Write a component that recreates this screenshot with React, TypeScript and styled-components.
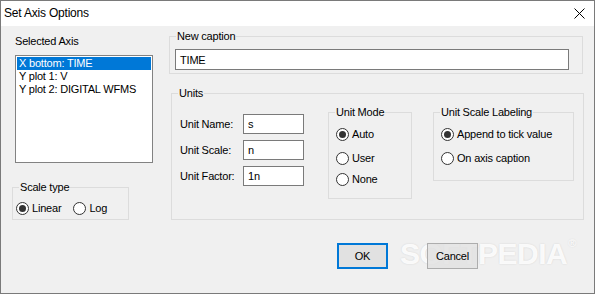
import styled, { createGlobalStyle } from "styled-components";

const GlobalStyle = createGlobalStyle`
  html, body {
    margin: 0;
    padding: 0;
    background: #f0f0f0;
  }
  body {
    font-family: "Liberation Sans", Arial, sans-serif;
    font-size: 11px;
    letter-spacing: -0.2px;
    color: #000;
  }
`;

const Window = styled.div`
  position: relative;
  width: 595px;
  height: 294px;
  box-sizing: border-box;
  border: 1px solid #7a7a7a;
  background: #f0f0f0;
  display: flex;
  flex-direction: column;
  overflow: hidden;
`;

const TitleBar = styled.div`
  height: 25px;
  background: #fff;
  display: flex;
  align-items: center;
  justify-content: space-between;
  padding: 0 9px 0 3px;
  flex-shrink: 0;
`;

const Title = styled.span`
  font-size: 12px;
  line-height: 15px;
`;

const Body = styled.div`
  flex: 1;
  display: flex;
  flex-direction: column;
`;

const Main = styled.div`
  display: grid;
  grid-template-columns: 141px 415px;
  column-gap: 16px;
  padding-left: 11px;
`;

const Column = styled.div`
  display: flex;
  flex-direction: column;
`;

const Caption = styled.div`
  line-height: 15px;
  margin: 8px 0 0 3px;
`;

const ListBox = styled.div`
  margin: 6px 0 0 3px;
  height: 108px;
  box-sizing: border-box;
  border: 1px solid #828282;
  background: #fff;
  padding: 1px;
`;

const ListItem = styled.div<{ $selected?: boolean }>`
  height: 13px;
  line-height: 13px;
  padding-left: 2px;
  white-space: nowrap;
  background: ${(p) => (p.$selected ? "#0078d7" : "transparent")};
  color: ${(p) => (p.$selected ? "#fff" : "#000")};
`;

const GroupBox = styled.fieldset<{ $h: number; $w: number; $pad: string; $mt: number; $ml?: number }>`
  margin: ${(p) => p.$mt}px 0 0 ${(p) => p.$ml ?? 0}px;
  padding: ${(p) => p.$pad};
  border: 1px solid #dcdcdc;
  height: ${(p) => p.$h}px;
  width: ${(p) => p.$w}px;
  box-sizing: border-box;
  min-width: 0;
  flex-shrink: 0;
`;

/* the fieldset's left padding also shifts the legend, so the legend takes it back */
const Legend = styled.legend<{ $shift?: number }>`
  padding: 0 1px;
  margin-left: ${(p) => 6 - (p.$shift ?? 0)}px;
  line-height: 14px;
`;

const TextBox = styled.div<{ $w?: number; $h: number }>`
  width: ${(p) => (p.$w ? `${p.$w}px` : "auto")};
  height: ${(p) => p.$h}px;
  box-sizing: border-box;
  border: 1px solid #7a7a7a;
  background: #fff;
  padding-left: 4px;
  display: flex;
  align-items: center;
`;

const UnitsContent = styled.div`
  display: flex;
  align-items: flex-start;
  padding-left: 8px;
`;

const FieldGrid = styled.div`
  margin-top: 9px;
  display: grid;
  grid-template-columns: 63px 61px;
  grid-auto-rows: 20px;
  row-gap: 6px;
  align-items: center;
`;

const RadioRow = styled.div<{ $mt?: number }>`
  display: flex;
  align-items: center;
  height: 16px;
  margin-top: ${(p) => p.$mt ?? 0}px;
  white-space: nowrap;
`;

const InlineRadios = styled.div`
  display: flex;
  gap: 12px;
`;

const Circle = styled.span<{ $checked?: boolean }>`
  width: 13px;
  height: 13px;
  box-sizing: border-box;
  border: 1px solid #333;
  border-radius: 50%;
  background: #fff;
  display: inline-flex;
  align-items: center;
  justify-content: center;
  margin-right: 3px;
  flex-shrink: 0;
  &::after {
    content: "";
    width: 7px;
    height: 7px;
    border-radius: 50%;
    background: ${(p) => (p.$checked ? "#333" : "transparent")};
  }
`;

const ButtonRow = styled.div`
  position: relative;
  z-index: 1;
  display: flex;
  gap: 39px;
  margin-top: 23px;
  padding-left: 336px;
`;

const Button = styled.div<{ $default?: boolean }>`
  width: 51px;
  height: 26px;
  box-sizing: border-box;
  background: ${(p) => (p.$default ? "#e1e1e1" : "rgba(225, 225, 225, 0.8)")};
  border: ${(p) => (p.$default ? "2px solid #0078d7" : "1px solid #adadad")};
  display: flex;
  align-items: center;
  justify-content: center;
`;

const Watermark = styled.div`
  position: absolute;
  left: 399px;
  top: 236px;
  font-family: "Liberation Sans", sans-serif;
  font-weight: bold;
  font-size: 30px;
  letter-spacing: -0.5px;
  color: rgba(255, 255, 255, 0.9);
  text-shadow: 0 0 2px rgba(0, 0, 0, 0.12);
  pointer-events: none;
  sup {
    font-size: 11px;
    font-weight: normal;
    vertical-align: top;
    margin-left: 1px;
  }
`;

function Radio({ label, checked, mt }: { label: string; checked?: boolean; mt?: number }) {
  return (
    <RadioRow $mt={mt}>
      <Circle $checked={checked} />
      {label}
    </RadioRow>
  );
}

export default function App() {
  return (
    <>
      <GlobalStyle />
      <Window>
        <TitleBar>
          <Title>Set Axis Options</Title>
          <svg width="11" height="11" viewBox="0 0 11 11">
            <path d="M0.5 0.5 L10.5 10.5 M10.5 0.5 L0.5 10.5" stroke="#000" strokeWidth="1" />
          </svg>
        </TitleBar>
        <Body>
          <Main>
            <Column>
              <Caption>Selected Axis</Caption>
              <ListBox>
                <ListItem $selected>X bottom: TIME</ListItem>
                <ListItem>Y plot 1: V</ListItem>
                <ListItem>Y plot 2: DIGITAL WFMS</ListItem>
              </ListBox>
              <GroupBox $h={40} $w={117} $pad="6px 3px 0" $mt={17}>
                <Legend $shift={3}>Scale type</Legend>
                <InlineRadios>
                  <Radio label="Linear" checked />
                  <Radio label="Log" />
                </InlineRadios>
              </GroupBox>
            </Column>
            <Column>
              <GroupBox $h={45} $w={414} $pad="6px 13px 0 5px" $mt={3}>
                <Legend $shift={5}>New caption</Legend>
                <TextBox $h={21}>TIME</TextBox>
              </GroupBox>
              <GroupBox $h={134} $w={413} $pad="5px 0 0 0" $mt={12} $ml={2}>
                <Legend>Units</Legend>
                <UnitsContent>
                  <FieldGrid>
                    <span>Unit Name:</span>
                    <TextBox $w={61} $h={20}>s</TextBox>
                    <span>Unit Scale:</span>
                    <TextBox $w={61} $h={20}>n</TextBox>
                    <span>Unit Factor:</span>
                    <TextBox $w={61} $h={20}>1n</TextBox>
                  </FieldGrid>
                  <GroupBox $h={94} $w={84} $pad="7px 0 0 7px" $mt={0} $ml={24}>
                    <Legend $shift={7}>Unit Mode</Legend>
                    <Radio label="Auto" checked />
                    <Radio label="User" mt={8} />
                    <Radio label="None" mt={5} />
                  </GroupBox>
                  <GroupBox $h={76} $w={141} $pad="7px 0 0 7px" $mt={0} $ml={21}>
                    <Legend $shift={7}>Unit Scale Labeling</Legend>
                    <Radio label="Append to tick value" checked />
                    <Radio label="On axis caption" mt={8} />
                  </GroupBox>
                </UnitsContent>
              </GroupBox>
            </Column>
          </Main>
          <Watermark>
            SOFTPEDIA<sup>®</sup>
          </Watermark>
          <ButtonRow>
            <Button $default>OK</Button>
            <Button>Cancel</Button>
          </ButtonRow>
        </Body>
      </Window>
    </>
  );
}
